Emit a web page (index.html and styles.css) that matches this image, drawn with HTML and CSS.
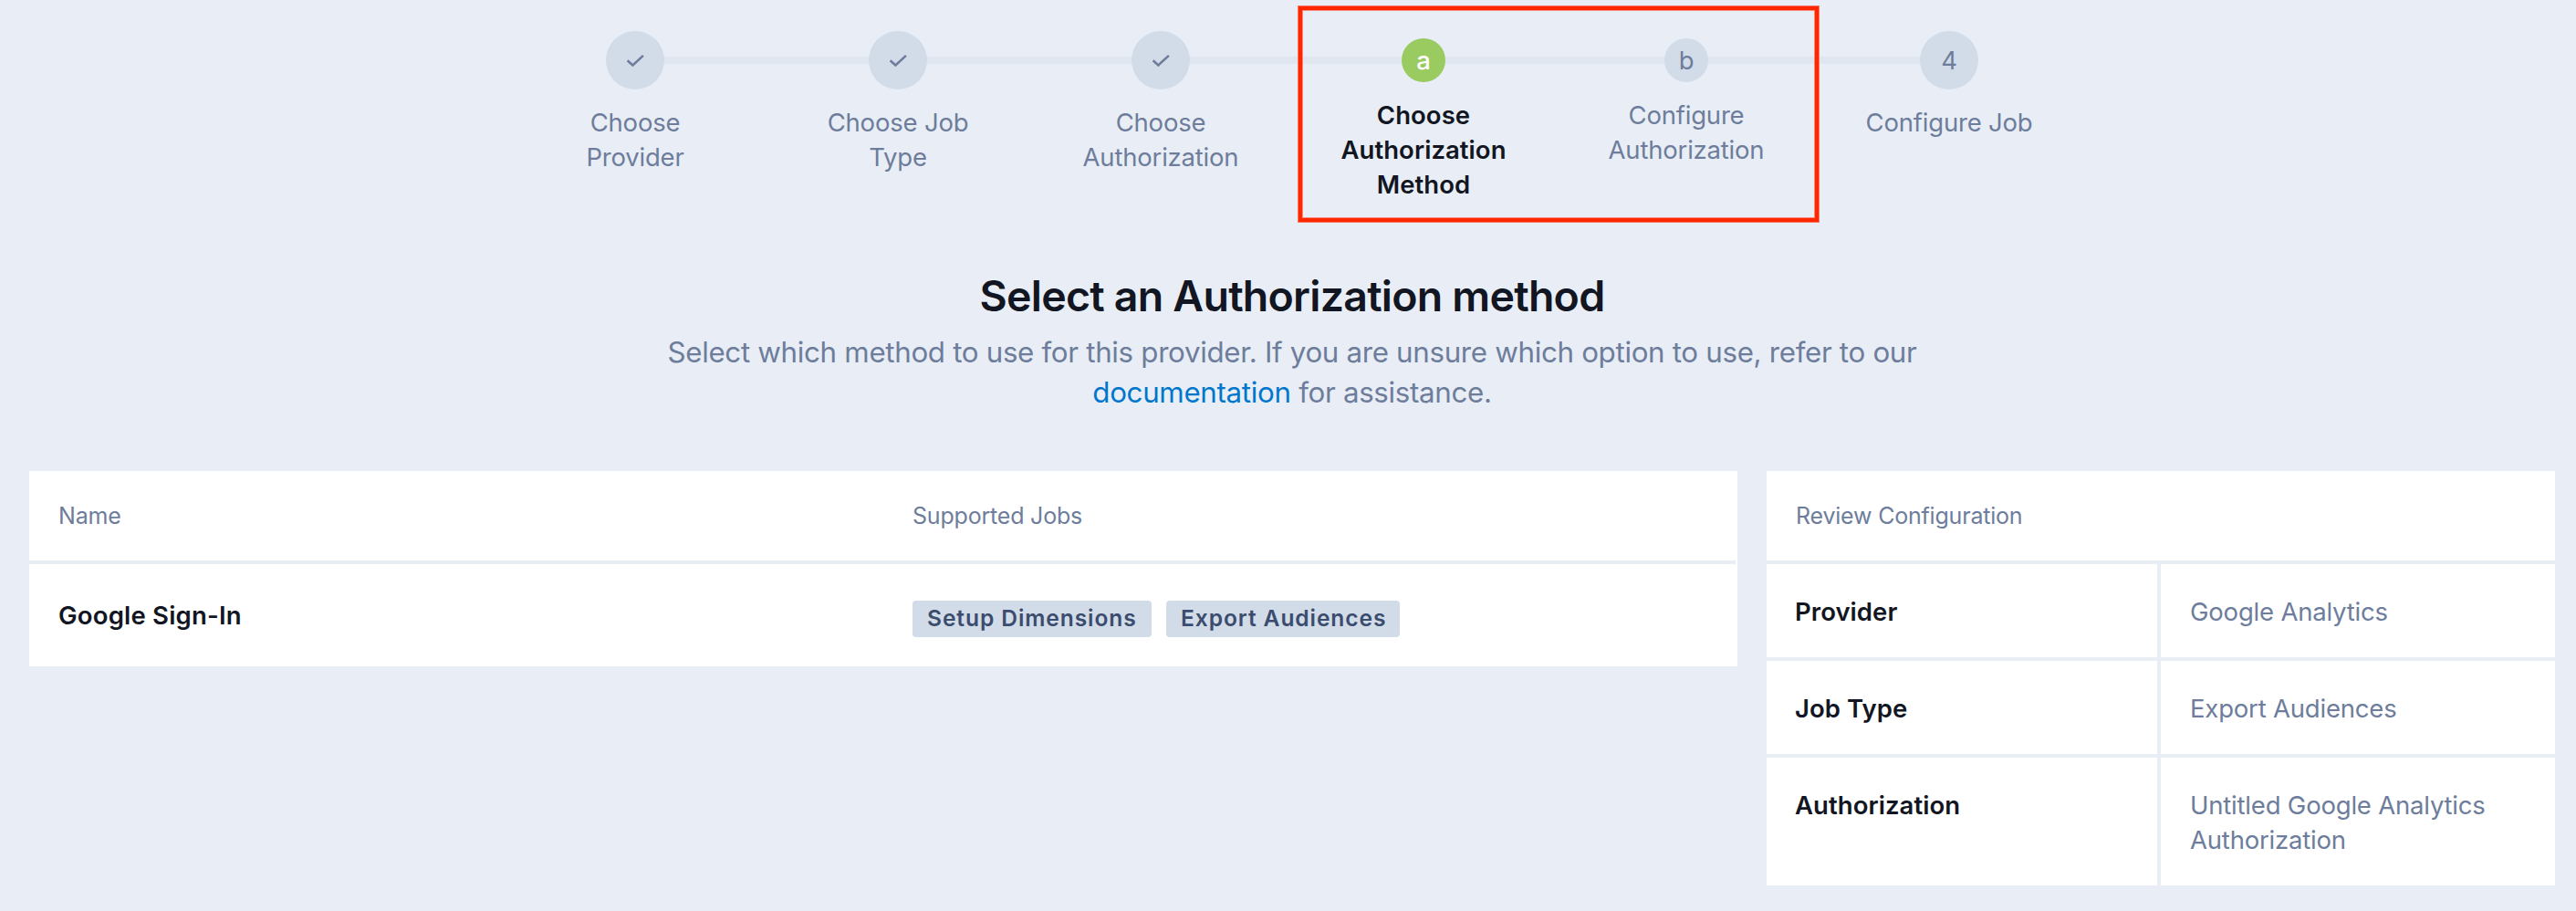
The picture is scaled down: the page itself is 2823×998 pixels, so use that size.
FILE: index.html
```html
<!DOCTYPE html>
<html lang="en">
<head>
<meta charset="utf-8">
<title>Select an Authorization method</title>
<link rel="stylesheet" href="styles.css">
</head>
<body>
<main class="page">
  <ol class="steps">
    <li class="step">
      <span class="dot"><svg class="check" viewBox="0 0 24 24"><path d="M3.6 12.2 L9.4 17.4 L20.9 6.9"/></svg></span>
      <span class="label">Choose<br>Provider</span>
    </li>
    <li class="step">
      <span class="dot"><svg class="check" viewBox="0 0 24 24"><path d="M3.6 12.2 L9.4 17.4 L20.9 6.9"/></svg></span>
      <span class="label">Choose Job<br>Type</span>
    </li>
    <li class="step">
      <span class="dot"><svg class="check" viewBox="0 0 24 24"><path d="M3.6 12.2 L9.4 17.4 L20.9 6.9"/></svg></span>
      <span class="label">Choose<br>Authorization</span>
    </li>
    <li class="step sub active">
      <span class="dot">a</span>
      <span class="label">Choose<br>Authorization<br>Method</span>
    </li>
    <li class="step sub">
      <span class="dot">b</span>
      <span class="label">Configure<br>Authorization</span>
    </li>
    <li class="step">
      <span class="dot">4</span>
      <span class="label">Configure Job</span>
    </li>
    <li class="highlight" aria-hidden="true"></li>
  </ol>

  <header class="intro">
    <h1 class="title">Select an Authorization method</h1>
    <p class="lead">Select which method to use for this provider. If you are unsure which option to use, refer to our<br><a class="link" href="#">documentation</a> for assistance.</p>
  </header>

  <div class="panels">
    <section class="card methods">
      <div class="row head"><span>Name</span><span>Supported Jobs</span></div>
      <div class="row item">
        <span class="name">Google Sign-In</span>
        <span class="tags"><span class="tag">Setup Dimensions</span><span class="tag second">Export Audiences</span></span>
      </div>
    </section>
    <section class="card review">
      <div class="head">Review Configuration</div>
      <dl class="pairs">
        <dt>Provider</dt><dd>Google Analytics</dd>
        <dt>Job Type</dt><dd>Export Audiences</dd>
        <dt>Authorization</dt><dd>Untitled Google Analytics<br>Authorization</dd>
      </dl>
    </section>
  </div>
</main>
</body>
</html>
```

FILE: styles.css
```css
* { box-sizing: border-box; }

body {
  margin: 0;
  background: #e9eef6;
  color: #6d7d9b;
  font: 400 27.5px/38px Inter, "Liberation Sans", sans-serif;
  letter-spacing: -0.2px;
}

.page { height: 998px; overflow: hidden; }

.steps {
  position: relative;
  display: grid;
  grid-template-columns: repeat(6, 288px);
  width: 1728px;
  height: 296px;
  margin: 0 0 0 552px;
  padding: 34px 0 0;
  list-style: none;
}

.step {
  position: relative;
  display: flex;
  flex-direction: column;
  align-items: center;
  gap: 17px;
  text-align: center;
}

.step.sub { padding-top: 8px; }

/* connector to the following step */
.step:not(:nth-child(6))::before {
  content: "";
  position: absolute;
  top: 28px;
  left: 50%;
  width: 100%;
  height: 8px;
  background: #dfe6f0;
}

.dot {
  position: relative;
  z-index: 1;
  display: flex;
  align-items: center;
  justify-content: center;
  width: 64px;
  height: 64px;
  border-radius: 50%;
  background: #d2dce8;
}

.sub .dot { width: 48px; height: 48px; }
.active .dot { background: #9acb60; color: #fff; font-weight: 500; }
.active .label { color: #111622; font-weight: 600; letter-spacing: 0.05px; }

.check { width: 24px; height: 24px; }
.check path { fill: none; stroke: #6d7d9b; stroke-width: 2.6; }

.highlight {
  position: absolute;
  z-index: 2;
  top: 7px;
  left: 871px;
  width: 570px;
  height: 236px;
  border: 4px solid #ff2600;
  box-shadow: 0 0 0 1px rgba(255, 38, 0, 0.6), inset 0 0 0 1px rgba(255, 38, 0, 0.5);
}

.intro { width: 1728px; margin-left: 552px; text-align: center; }

.title {
  margin: 0;
  color: #111622;
  font-size: 46.5px;
  font-weight: 600;
  line-height: 56px;
  letter-spacing: -0.77px;
}

.lead {
  margin: 12px 0 0;
  font-size: 31.3px;
  line-height: 44px;
  letter-spacing: -0.32px;
}

.link { color: #0077cc; text-decoration: none; }

.panels {
  display: flex;
  align-items: flex-start;
  gap: 32px;
  margin: 64px 23px 0 32px;
}

.card { background: #fff; }
.methods { width: 1872px; }
.review { width: 864px; }

.row { display: grid; grid-template-columns: 936px 1fr; padding: 0 32px; }

.head {
  height: 98px;
  padding: 32px;
  font-size: 25px;
  line-height: 34px;
}

.item {
  width: 1870px;
  height: 116px;
  padding-top: 37px;
  border-top: 4px solid #e9eef4;
}

.name, dt { color: #111622; font-weight: 600; letter-spacing: 0.05px; }
.name { letter-spacing: 0.2px; }

.tags { display: flex; gap: 16px; padding-top: 3px; }

.tag {
  width: 262px;
  height: 40px;
  padding: 0 16px;
  border-radius: 4px;
  background: #d2dce8;
  color: #3b4c6e;
  font-size: 24.6px;
  font-weight: 600;
  letter-spacing: 0.9px;
  line-height: 38px;
  white-space: nowrap;
}

.tag.second { width: 256px; }

.pairs {
  display: grid;
  grid-template-columns: 428px 432px;
  gap: 4px;
  margin: 0;
  padding-top: 4px;
  background: #e9eef4;
}

dt, dd { margin: 0; padding: 33px 32px 31px; background: #fff; }
dt { padding-left: 31px; }
```
